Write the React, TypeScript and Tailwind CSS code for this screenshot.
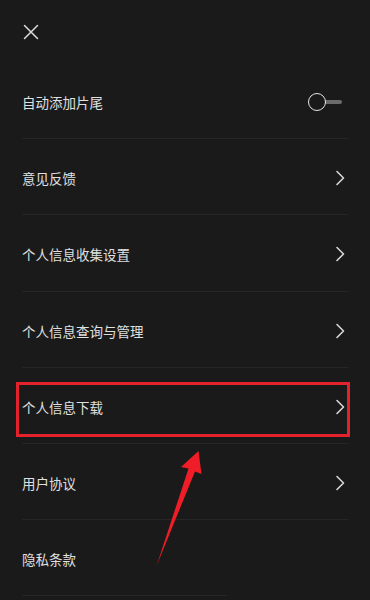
import React from "react";

// 设置页：关闭按钮 + 列表项，外加红框和箭头标注
const FONT = '"Noto Sans CJK SC", "Noto Sans", sans-serif';

const items: { label: string; kind: "toggle" | "arrow" | "none" }[] = [
  { label: "自动添加片尾", kind: "toggle" },
  { label: "意见反馈", kind: "arrow" },
  { label: "个人信息收集设置", kind: "arrow" },
  { label: "个人信息查询与管理", kind: "arrow" },
  { label: "个人信息下载", kind: "arrow" },
  { label: "用户协议", kind: "arrow" },
  { label: "隐私条款", kind: "none" },
];

function Chevron() {
  return (
    <svg width="10" height="16" viewBox="0 0 10 16" fill="none">
      <path d="M2 1.5 L8.5 8 L2 14.5" stroke="#d6d6d6" strokeWidth="1.6" strokeLinecap="round" strokeLinejoin="round" />
    </svg>
  );
}

function Toggle() {
  return (
    <div className="flex items-center">
      <div className="z-10 h-[18px] w-[18px] rounded-full border-[1.6px] border-[#e6e6e6] bg-[#1a1a1a]" />
      <div className="-ml-[2px] h-[3.5px] w-[18px] rounded-r-full bg-[#6b6b6b]" />
    </div>
  );
}

export default function App() {
  return (
    <div className="relative h-[600px] w-[370px] overflow-hidden bg-[#1a1a1a]" style={{ fontFamily: FONT }}>
      <div className="flex h-[63px] items-center pl-[23px]">
        <svg width="16" height="16" viewBox="0 0 16 16" fill="none">
          <path d="M1.5 1.5 L14.5 14.5 M14.5 1.5 L1.5 14.5" stroke="#dcdcdc" strokeWidth="1.5" strokeLinecap="round" />
        </svg>
      </div>
      <div className="px-[22px]">
        {items.map((it, i) => (
          <div
            key={it.label}
            className={`flex h-[76.2px] items-center justify-between border-b pt-[3px] ${i === items.length - 1 ? "border-transparent" : "border-[#262626]"}`}
          >
            <span className="text-[13.5px] text-[#e0e0e0]">{it.label}</span>
            {it.kind === "arrow" && (
              <span className="mr-[3px]">
                <Chevron />
              </span>
            )}
            {it.kind === "toggle" && (
              <span className="mr-[6px]">
                <Toggle />
              </span>
            )}
          </div>
        ))}
        {/* 最后一条分割线只露出一段 */}
        <div className="-mt-px h-px w-[205px] bg-[#262626]" />
      </div>

      {/* 标注：红框 */}
      <div className="absolute left-[16px] top-[382px] h-[55px] w-[334px] border-[3px] border-[#e3222b]" />
      {/* 标注：箭头 */}
      <svg className="absolute left-0 top-0" width="370" height="600" viewBox="0 0 370 600">
        <polygon points="198.5,451 181,467 188.5,468.5 156.5,566 195,471.5 201.5,474" fill="#ee1d27" />
      </svg>
    </div>
  );
}
